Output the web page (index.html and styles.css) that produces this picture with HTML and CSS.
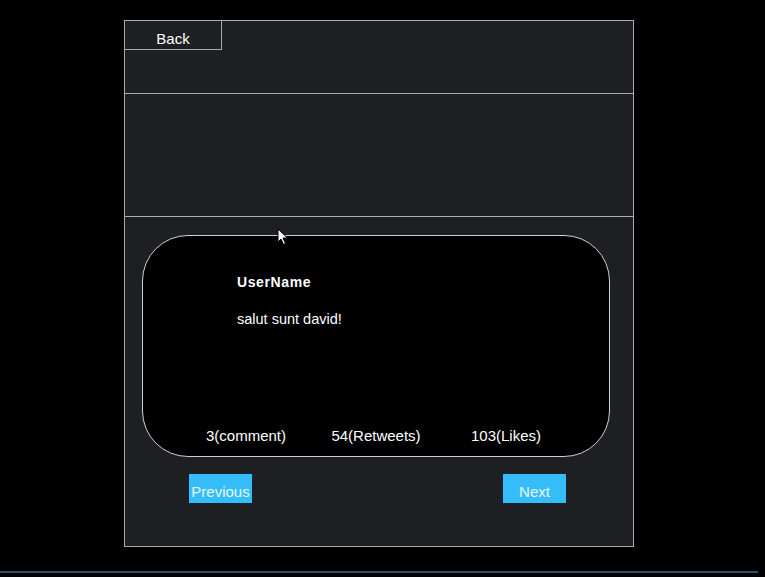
FILE: index.html
```html
<!DOCTYPE html>
<html>
<head>
<meta charset="utf-8">
<link rel="stylesheet" href="styles.css">
</head>
<body>
<div class="panel">
  <div class="top">
    <button class="back">Back</button>
  </div>
  <div class="middle"></div>
  <div class="feed">
    <div class="card">
      <div class="user">UserName</div>
      <div class="msg">salut sunt david!</div>
      <div class="stats">
        <span class="stat">3(comment)</span>
        <span class="stat">54(Retweets)</span>
        <span class="stat">103(Likes)</span>
      </div>
    </div>
    <div class="nav">
      <button class="navbtn">Previous</button>
      <button class="navbtn">Next</button>
    </div>
  </div>
  <svg class="cursor" width="12" height="18" viewBox="0 0 12 18"><path d="M1 1 L1 14 L4 11 L6.5 16.5 L8.5 15.5 L6 10 L10.5 10 Z" fill="#fff" stroke="#000" stroke-width="1"/></svg>
</div>
<div class="bar"></div>
</body>
</html>
```

FILE: styles.css
```css
html, body {
  margin: 0;
  padding: 0;
  background: #000;
  font-family: "Liberation Sans", Arial, sans-serif;
  color: #fff;
}
.panel {
  position: relative;
  margin: 20px 0 0 124px;
  width: 508px;
  height: 525px;
  border: 1px solid #a9abb0;
  background: #1e1f23;
  display: flex;
  flex-direction: column;
}
.top {
  height: 72px;
  border-bottom: 1px solid #a9abb0;
}
.back {
  display: block;
  width: 97px;
  height: 29px;
  margin: 0;
  padding: 6px 0 0 0;
  background: #1e1f23;
  border: none;
  border-right: 1px solid #a9abb0;
  border-bottom: 1px solid #a9abb0;
  color: #fff;
  font-family: "Liberation Sans", Arial, sans-serif;
  font-size: 15px;
}
.middle {
  height: 122px;
  border-bottom: 1px solid #a9abb0;
}
.feed {
  flex: 1;
  padding: 18px 23px 0 17px;
}
.card {
  height: 220px;
  border: 1px solid #d0d0d0;
  border-radius: 46px;
  background: #000;
  display: flex;
  flex-direction: column;
  padding-left: 94px;
}
.user {
  margin-top: 38px;
  font-weight: bold;
  font-size: 14px;
  line-height: 16px;
  letter-spacing: 0.6px;
}
.msg {
  margin-top: 21px;
  font-size: 14.5px;
  line-height: 16px;
}
.stats {
  margin-top: auto;
  margin-bottom: 12px;
  margin-left: -94px;
  display: flex;
  justify-content: center;
}
.stat {
  width: 130px;
  text-align: center;
  font-size: 15px;
  line-height: 16px;
}
.nav {
  display: flex;
  justify-content: space-between;
  margin: 16px 43px 0 46px;
}
.navbtn {
  width: 65px;
  height: 31px;
  margin: 0;
  padding: 5px 0 0 0;
  background: #35bdf9;
  border: 1px solid #0b2230;
  color: #eaf7ff;
  font-family: "Liberation Sans", Arial, sans-serif;
  font-size: 15px;
}
.cursor {
  position: absolute;
  left: 152px;
  top: 207px;
}
.bar {
  margin-top: 24px;
  width: 758px;
  height: 2px;
  background: #27536f;
}
```
